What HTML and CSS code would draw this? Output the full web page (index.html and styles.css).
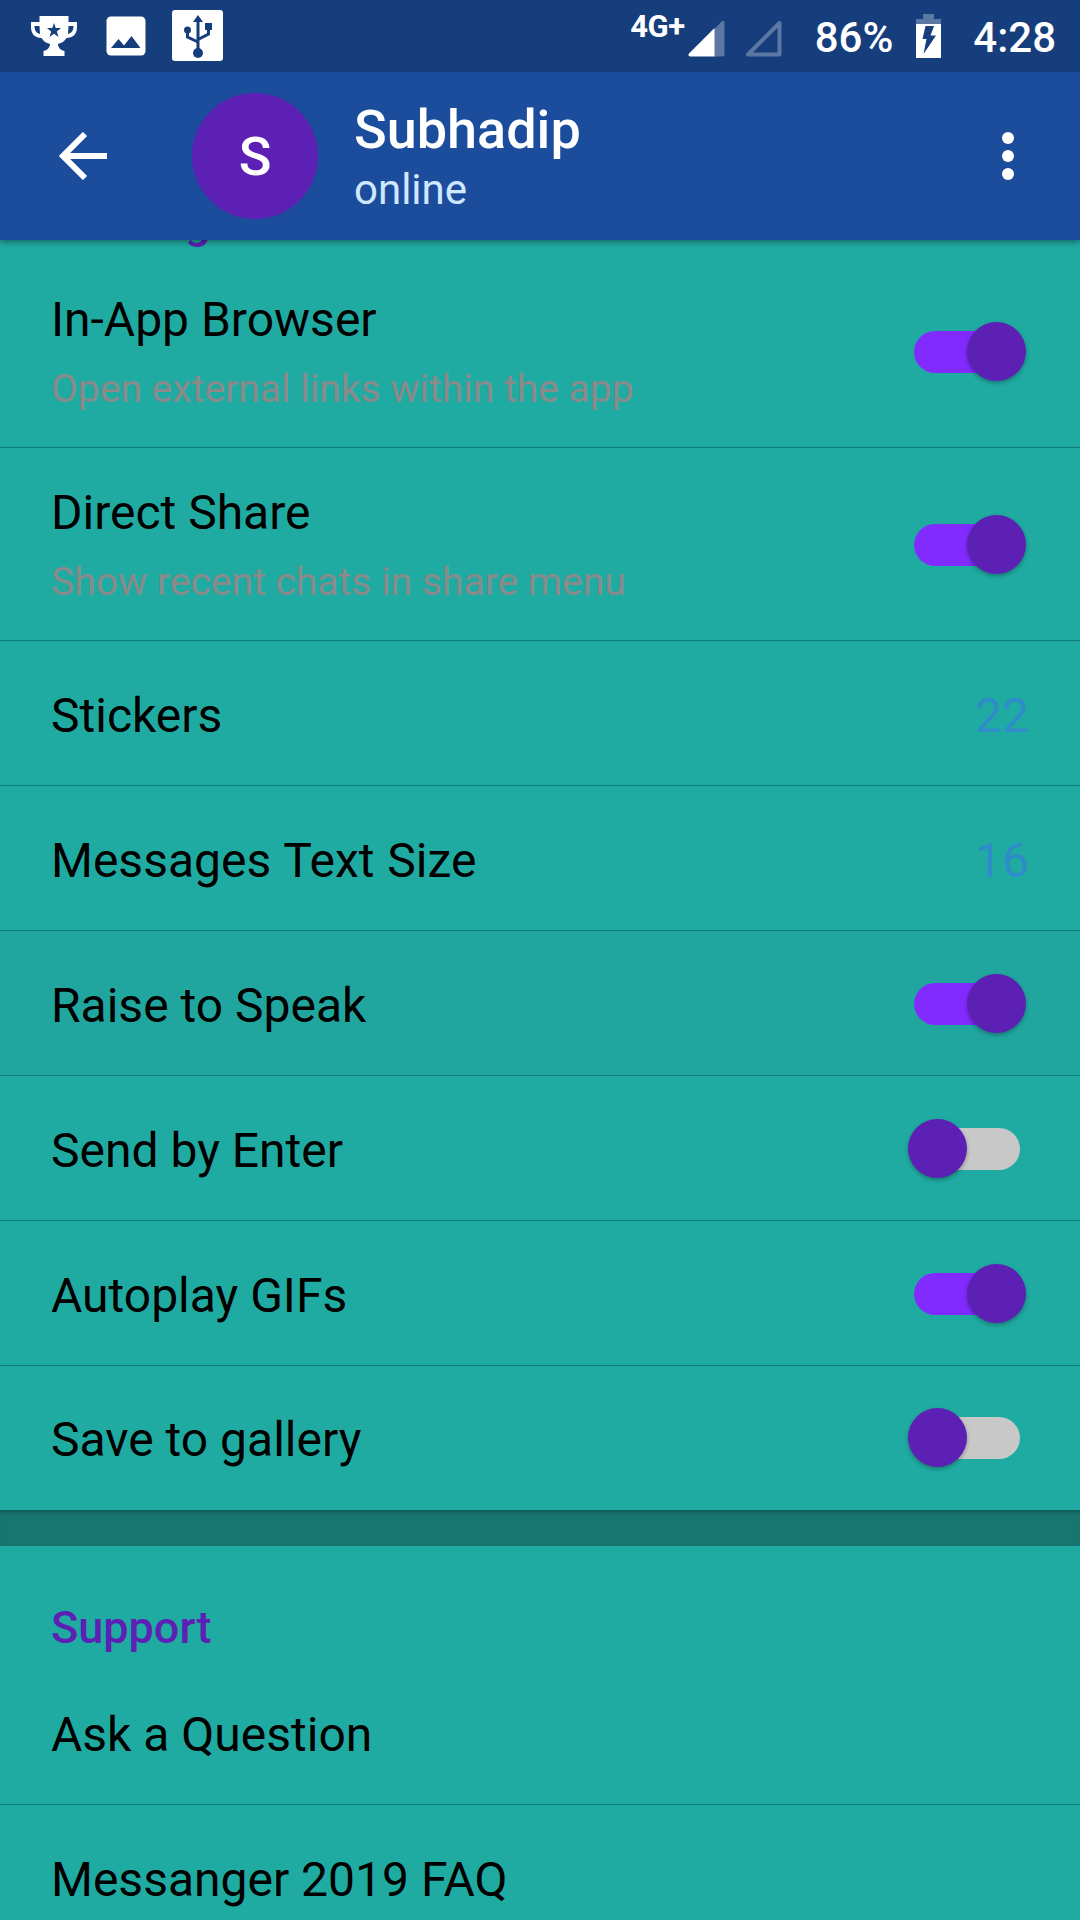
FILE: index.html
```html
<!DOCTYPE html>
<html lang="en">
  <head>
    <meta charset="UTF-8" />
    <meta name="viewport" content="width=device-width, initial-scale=1.0" />
    <title>Settings</title>
    <link rel="stylesheet" href="styles.css">
  </head>
  <body>
    <div class="statusbar">
      <div class="notifications">
        <svg class="trophy" width="46" height="40" viewBox="0 0 46 40">
          <path fill="#fff" fill-rule="evenodd" d="M8.500 0H37.500V6H46V11C46 18 42 22 35.500 22C33 26 30 27 27 28C27 31 29 34 33.500 35V40H12.500V35C17 34 19 31 19 28C16 27 13 26 10.500 22C4 22 0 18 0 11V6H8.500ZM3.500 10C3.500 14 5 17 9 18L8.500 10ZM42.500 10H37.500L37 18C41 17 42.500 14 42.500 10ZM23 7L21.300 12H16L20.200 15.500L18.500 21L23 17.700L27.500 21L25.800 15.500L30 12H24.700Z" />
        </svg>
        <svg class="picture" width="40" height="40" viewBox="0 0 40 40">
          <rect x="0.500" y="0.500" width="39" height="39" rx="4.500" fill="#fff" />
          <path fill="#163d7c" d="M5 32L12.500 23L18 29.500L25.500 20L34.500 32Z" />
        </svg>
        <svg class="usb" width="51" height="51" viewBox="0 0 51 51">
          <rect width="51" height="51" rx="3" fill="#fff" />
          <g fill="#163d7c">
            <path d="M26 5L31 12H21Z" />
            <circle cx="26" cy="43" r="5" />
            <circle cx="15.500" cy="20" r="3.500" />
            <path d="M33 13H40V20H33Z" />
          </g>
          <path fill="none" stroke="#163d7c" stroke-width="3" d="M26 10V41M15.500 20V27L26 32M36.500 18V24L26 29.500" />
        </svg>
      </div>
      <div class="system">
        <span class="network">4G+</span>
        <svg class="signal" width="37" height="37" viewBox="0 0 37 37">
          <path fill="#5c77a4" d="M26 9.500L33.500 1.500Q36.500 -0.500 36.500 3V34Q36.500 36.500 34 36.500H26Z" />
          <path fill="#fff" d="M26.500 8V36.500H2Q-0.500 36 1 33.500Z" />
        </svg>
        <svg class="signal-empty" width="37" height="37" viewBox="0 0 37 37">
          <path fill="none" stroke="#5c77a4" stroke-width="4" stroke-linejoin="round" d="M34.500 3V34.500H3Z" />
        </svg>
        <span class="percent">86%</span>
        <svg class="battery" width="25" height="44" viewBox="0 0 25 44">
          <path fill="#5c77a4" d="M7 0H18V5H25V10H0V5H7Z" />
          <path fill="#fff" d="M0 10H25V44H0Z" />
          <path fill="#163d7c" d="M9.500 12H18L14.500 21.500H20L7.500 40L10.500 25H6.500Z" />
        </svg>
        <span class="clock">4:28</span>
      </div>
    </div>

    <header>
      <svg class="back" width="48" height="48" viewBox="0 0 48 48">
        <path fill="none" stroke="#fff" stroke-width="6" d="M48 24H5M26 2L4 24L26 46" />
      </svg>
      <div class="avatar">S</div>
      <div class="user">
        <h1>Subhadip</h1>
        <p>online</p>
      </div>
      <svg class="more" width="12" height="48" viewBox="0 0 12 48">
        <g fill="#fff">
          <circle cx="6" cy="6" r="6" />
          <circle cx="6" cy="24" r="6" />
          <circle cx="6" cy="42" r="6" />
        </g>
      </svg>
    </header>

    <main>
      <section class="messages">
        <h2>Messages</h2>
        <div class="row tall">
          <div>
            <p class="label">In-App Browser</p>
            <p class="info">Open external links within the app</p>
          </div>
          <span class="switch on"></span>
        </div>
        <div class="row tall">
          <div>
            <p class="label">Direct Share</p>
            <p class="info">Show recent chats in share menu</p>
          </div>
          <span class="switch on"></span>
        </div>
        <div class="row">
          <p class="label">Stickers</p>
          <span class="value">22</span>
        </div>
        <div class="row">
          <p class="label wide">Messages Text Size</p>
          <span class="value">16</span>
        </div>
        <div class="row pressed">
          <p class="label">Raise to Speak</p>
          <span class="switch on"></span>
        </div>
        <div class="row">
          <p class="label">Send by Enter</p>
          <span class="switch"></span>
        </div>
        <div class="row">
          <p class="label">Autoplay GIFs</p>
          <span class="switch on"></span>
        </div>
        <div class="row last">
          <p class="label">Save to gallery</p>
          <span class="switch"></span>
        </div>
      </section>
      <div class="divider"></div>
      <section>
        <h2>Support</h2>
        <div class="row">
          <p class="label">Ask a Question</p>
        </div>
        <div class="row">
          <p class="label">Messanger 2019 FAQ</p>
        </div>
      </section>
    </main>
  </body>
</html>
```

FILE: styles.css
```css
* {
  box-sizing: border-box;
}
body {
  margin: 0;
  height: 1920px;
  display: flex;
  flex-direction: column;
  overflow: hidden;
  font-family: Roboto, sans-serif;
  background-color: #20aba2;
}
h1, h2, p {
  margin: 0;
}
svg {
  display: block;
  flex: none;
}

/* status bar */
.statusbar {
  flex: none;
  position: relative;
  z-index: 2;
  height: 72px;
  display: flex;
  justify-content: space-between;
  background-color: #163d7c;
  color: #fff;
  font-weight: 500;
}
.notifications, .system {
  display: flex;
  align-items: flex-start;
}
.notifications {
  padding-left: 31px;
}
.trophy {
  margin-top: 16px;
}
.picture {
  margin: 16px 0 0 29px;
}
.usb {
  margin: 10px 0 0 26px;
}
.system {
  padding-right: 24px;
}
.network {
  margin-top: 8px;
  font-size: 31px;
  font-weight: 700;
  letter-spacing: -0.5px;
  line-height: 38px;
}
.signal {
  margin: 20px 0 0 3px;
}
.signal-empty {
  margin: 20px 33px 0 20px;
}
.percent, .clock {
  margin-top: 13px;
  font-size: 42px;
  line-height: 50px;
}
.battery {
  margin: 14px 32px 0 23px;
}

/* title bar */
header {
  flex: none;
  position: relative;
  z-index: 1;
  height: 168px;
  display: flex;
  align-items: center;
  padding: 0 66px 0 59px;
  background-color: #1c4d9c;
  box-shadow: 0 1px 7px rgba(0, 0, 0, 0.5);
}
.avatar {
  width: 126px;
  height: 126px;
  margin: 0 36px 0 85px;
  border-radius: 50%;
  background-color: #5d20b4;
  color: #fff;
  font-size: 54px;
  font-weight: 500;
  line-height: 128px;
  text-align: center;
}
.user {
  flex: 1;
  padding-top: 2px;
}
.user h1 {
  color: #fff;
  font-size: 54px;
  font-weight: 500;
  line-height: 64px;
}
.user p {
  color: #d0e8ff;
  font-size: 42px;
  line-height: 55px;
}

/* settings list */
main {
  flex: 1;
  min-height: 0;
  overflow: hidden;
}
.messages {
  margin-top: -99px;
}
h2 {
  height: 114px;
  padding: 55px 51px 0;
  color: #5d20b4;
  font-size: 45px;
  font-weight: 500;
  line-height: 53px;
}
.row {
  height: 145px;
  display: flex;
  align-items: center;
  justify-content: space-between;
  padding: 0 51px;
  border-bottom: 1px solid #117b76;
}
.row.tall {
  height: 193px;
}
.row.pressed {
  background-color: #21a69f;
}
.row.last {
  height: 144px;
  border-bottom: none;
}
.label {
  padding-top: 5px;
  color: #000;
  font-size: 48px;
  line-height: 56px;
}
.label.wide {
  word-spacing: 1px;
}
.tall .label {
  padding-top: 2px;
}
.last .label {
  padding-top: 3px;
}
.info {
  margin-top: 18px;
  color: #8a8a8a;
  font-size: 39px;
  line-height: 46px;
}
.value {
  padding-top: 5px;
  color: #2f8cc9;
  font-size: 48px;
  line-height: 56px;
}

.switch {
  position: relative;
  width: 106px;
  height: 42px;
  margin: 2px 9px 0 0;
  border-radius: 21px;
  background-color: #c8c8c8;
}
.last .switch {
  margin-top: 0;
}
.switch::after {
  content: "";
  position: absolute;
  left: -6px;
  top: -9px;
  width: 59px;
  height: 59px;
  border-radius: 50%;
  background-color: #5d20b4;
  box-shadow: 0 2px 4px rgba(0, 0, 0, 0.3);
}
.switch.on {
  background-color: #822bff;
}
.switch.on::after {
  left: 53px;
}

.divider {
  height: 36px;
  background-color: #187670;
  box-shadow: inset 0 5px 5px -3px rgba(0, 0, 0, 0.25);
}
```
